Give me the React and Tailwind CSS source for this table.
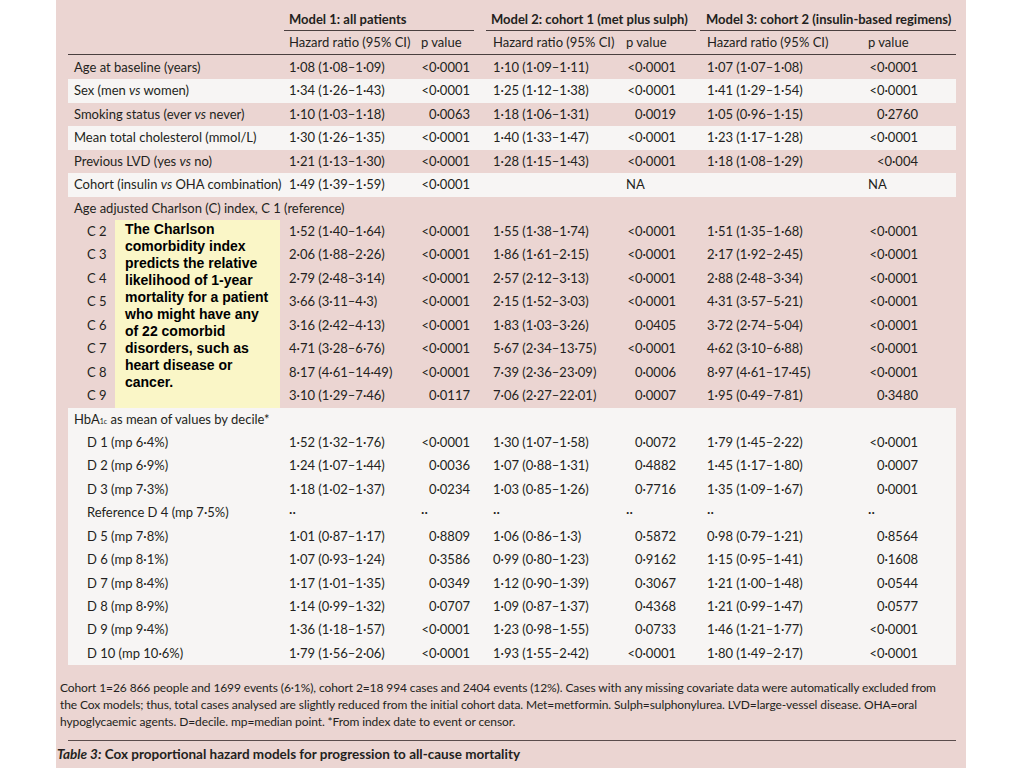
const topRows = [
  ['Age at baseline (years)', '1·08 (1·08–1·09)', '<0·0001', '1·10 (1·09–1·11)', '<0·0001', '1·07 (1·07–1·08)', '<0·0001'],
  ['Sex (men vs women)', '1·34 (1·26–1·43)', '<0·0001', '1·25 (1·12–1·38)', '<0·0001', '1·41 (1·29–1·54)', '<0·0001'],
  ['Smoking status (ever vs never)', '1·10 (1·03–1·18)', '0·0063', '1·18 (1·06–1·31)', '0·0019', '1·05 (0·96–1·15)', '0·2760'],
  ['Mean total cholesterol (mmol/L)', '1·30 (1·26–1·35)', '<0·0001', '1·40 (1·33–1·47)', '<0·0001', '1·23 (1·17–1·28)', '<0·0001'],
  ['Previous LVD (yes vs no)', '1·21 (1·13–1·30)', '<0·0001', '1·28 (1·15–1·43)', '<0·0001', '1·18 (1·08–1·29)', '<0·004'],
  ['Cohort (insulin vs OHA combination)', '1·49 (1·39–1·59)', '<0·0001', '', 'NA', '', 'NA'],
];

const charlson = [
  ['C 2', '1·52 (1·40–1·64)', '<0·0001', '1·55 (1·38–1·74)', '<0·0001', '1·51 (1·35–1·68)', '<0·0001'],
  ['C 3', '2·06 (1·88–2·26)', '<0·0001', '1·86 (1·61–2·15)', '<0·0001', '2·17 (1·92–2·45)', '<0·0001'],
  ['C 4', '2·79 (2·48–3·14)', '<0·0001', '2·57 (2·12–3·13)', '<0·0001', '2·88 (2·48–3·34)', '<0·0001'],
  ['C 5', '3·66 (3·11–4·3)', '<0·0001', '2·15 (1·52–3·03)', '<0·0001', '4·31 (3·57–5·21)', '<0·0001'],
  ['C 6', '3·16 (2·42–4·13)', '<0·0001', '1·83 (1·03–3·26)', '0·0405', '3·72 (2·74–5·04)', '<0·0001'],
  ['C 7', '4·71 (3·28–6·76)', '<0·0001', '5·67 (2·34–13·75)', '<0·0001', '4·62 (3·10–6·88)', '<0·0001'],
  ['C 8', '8·17 (4·61–14·49)', '<0·0001', '7·39 (2·36–23·09)', '0·0006', '8·97 (4·61–17·45)', '<0·0001'],
  ['C 9', '3·10 (1·29–7·46)', '0·0117', '7·06 (2·27–22·01)', '0·0007', '1·95 (0·49–7·81)', '0·3480'],
];

const deciles = [
  ['D 1 (mp 6·4%)', '1·52 (1·32–1·76)', '<0·0001', '1·30 (1·07–1·58)', '0·0072', '1·79 (1·45–2·22)', '<0·0001'],
  ['D 2 (mp 6·9%)', '1·24 (1·07–1·44)', '0·0036', '1·07 (0·88–1·31)', '0·4882', '1·45 (1·17–1·80)', '0·0007'],
  ['D 3 (mp 7·3%)', '1·18 (1·02–1·37)', '0·0234', '1·03 (0·85–1·26)', '0·7716', '1·35 (1·09–1·67)', '0·0001'],
  ['Reference D 4 (mp 7·5%)', '··', '··', '··', '··', '··', '··'],
  ['D 5 (mp 7·8%)', '1·01 (0·87–1·17)', '0·8809', '1·06 (0·86–1·3)', '0·5872', '0·98 (0·79–1·21)', '0·8564'],
  ['D 6 (mp 8·1%)', '1·07 (0·93–1·24)', '0·3586', '0·99 (0·80–1·23)', '0·9162', '1·15 (0·95–1·41)', '0·1608'],
  ['D 7 (mp 8·4%)', '1·17 (1·01–1·35)', '0·0349', '1·12 (0·90–1·39)', '0·3067', '1·21 (1·00–1·48)', '0·0544'],
  ['D 8 (mp 8·9%)', '1·14 (0·99–1·32)', '0·0707', '1·09 (0·87–1·37)', '0·4368', '1·21 (0·99–1·47)', '0·0577'],
  ['D 9 (mp 9·4%)', '1·36 (1·18–1·57)', '<0·0001', '1·23 (0·98–1·55)', '0·0733', '1·46 (1·21–1·77)', '<0·0001'],
  ['D 10 (mp 10·6%)', '1·79 (1·56–2·06)', '<0·0001', '1·93 (1·55–2·42)', '<0·0001', '1·80 (1·49–2·17)', '<0·0001'],
];

const grid = 'grid grid-cols-[216px_137px_51px_14px_140px_52px_22px_168px_52px_36px] items-center h-[23.45px]';

// italicise the "vs" in row labels
function Label({ text }) {
  const parts = text.split(' vs ');
  if (parts.length === 1) return text;
  return (
    <>
      {parts[0]} <i>vs</i> {parts[1]}
    </>
  );
}

// p values are right aligned, NA and ·· sit left
function PCell({ v }) {
  const left = v === 'NA' || v === '··';
  return <div className={left ? 'text-left' : 'text-right pr-[2px]'}>{v}</div>;
}

function Row({ r, indent, white }) {
  return (
    <div className={`${grid} ${white ? 'bg-[#f7f5f4]' : ''}`}>
      <div className={indent ? 'pl-[19px]' : 'pl-[6px]'}>
        <Label text={r[0]} />
      </div>
      <div className="pl-[5px]">{r[1]}</div>
      <PCell v={r[2]} />
      <div />
      <div className="pl-[7px]">{r[3]}</div>
      <PCell v={r[4]} />
      <div />
      <div className="pl-[7px]">{r[5]}</div>
      <PCell v={r[6]} />
      <div />
    </div>
  );
}

export default function App() {
  return (
    <div className="w-[1024px] h-[768px] bg-white overflow-hidden" style={{ fontFamily: 'Lato, "Liberation Sans", sans-serif' }}>
      <div className="ml-[56px] w-[910px] h-full bg-[#ebd5d2] pl-[12px] text-[13px] text-[#231f20]">
        <div className="w-[888px]">
          {/* Model headers */}
          <div className="flex pt-[11px] font-bold leading-[16px]">
            <div className="w-[216px]" />
            <div className="w-[190px] pl-[5px] pb-[3px] border-b border-[#4a3f3f]">Model 1: all patients</div>
            <div className="w-[12px]" />
            <div className="w-[210px] pl-[5px] pb-[3px] border-b border-[#4a3f3f]">Model 2: cohort 1 (met plus sulph)</div>
            <div className="w-[4px]" />
            <div className="w-[256px] pl-[6px] pb-[3px] border-b border-[#4a3f3f]">Model 3: cohort 2 (insulin-based regimens)</div>
          </div>
          <div className={`${grid} !h-[24px] border-b border-[#4a3f3f]`}>
            <div />
            <div className="pl-[5px]">Hazard ratio (95% CI)</div>
            <div>p value</div>
            <div />
            <div className="pl-[7px]">Hazard ratio (95% CI)</div>
            <div>p value</div>
            <div />
            <div className="pl-[7px]">Hazard ratio (95% CI)</div>
            <div>p value</div>
            <div />
          </div>

          <div className="pt-[1px]">
            {topRows.map((r, i) => (
              <Row key={r[0]} r={r} white={i % 2 === 1} />
            ))}
          </div>

          <div className="h-[23.45px] flex items-center pl-[6px]">Age adjusted Charlson (C) index, C 1 (reference)</div>

          <div className="relative">
            {charlson.map((r) => (
              <Row key={r[0]} r={r} indent />
            ))}
            <div
              className="absolute top-0 bottom-0 left-[47px] w-[165px] bg-[#faf6c7] pl-[10px] pr-[8px] pt-[1px] text-[14px] font-bold leading-[17px] text-black"
              style={{ fontFamily: '"Liberation Sans", Arial, sans-serif' }}
            >
              The Charlson comorbidity index predicts the relative likelihood of 1-year mortality for a patient who might have any of 22 comorbid disorders, such as heart disease or cancer.
            </div>
          </div>

          <div className="bg-[#f7f5f4]">
            <div className="h-[23.45px] flex items-center pl-[6px]">
              HbA<sub className="text-[7px] relative top-[2px]">1c</sub>&nbsp;as mean of values by decile*
            </div>
            {deciles.map((r) => (
              <Row key={r[0]} r={r} indent />
            ))}
          </div>

          {/* Footnote */}
          <p className="mt-[14px] -ml-[8px] w-[882px] text-[12px] tracking-[-0.1px] leading-[17px]">
            Cohort 1=26 866 people and 1699 events (6·1%), cohort 2=18 994 cases and 2404 events (12%). Cases with any missing covariate data were automatically excluded from the Cox models; thus, total cases analysed are slightly reduced from the initial cohort data. Met=metformin. Sulph=sulphonylurea. LVD=large-vessel disease. OHA=oral hypoglycaemic agents. D=decile. mp=median point. *From index date to event or censor.
          </p>
          <div className="mt-[10px] border-t border-[#5a4c4c]" />
          <div className="mt-[3px] -ml-[11px] font-bold text-[13.5px]">
            <i>Table 3:</i> Cox proportional hazard models for progression to all-cause mortality
          </div>
        </div>
      </div>
    </div>
  );
}
